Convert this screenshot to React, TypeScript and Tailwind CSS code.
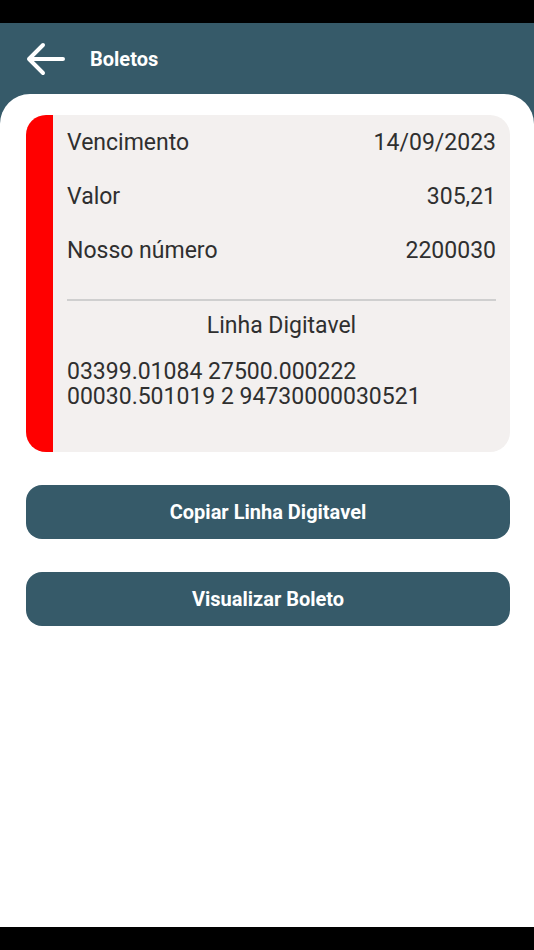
export default function App() {
  const rows = [
    { label: "Vencimento", value: "14/09/2023" },
    { label: "Valor", value: "305,21" },
    { label: "Nosso número", value: "2200030" },
  ];

  return (
    <div
      className="flex h-[950px] w-[534px] flex-col bg-black"
      style={{ fontFamily: "Roboto, 'Noto Sans', sans-serif" }}
    >
      <div className="h-[23px] shrink-0 bg-black" />

      <div className="flex flex-1 flex-col bg-[#365a69]">
        {/* header */}
        <div className="flex h-[71px] shrink-0 items-center">
          <button className="ml-[25px] flex h-[40px] w-[40px] items-center">
            <svg width="40" height="34" viewBox="0 0 40 34" fill="none">
              <path
                d="M38 17H4M18 3L4 17l14 14"
                stroke="white"
                strokeWidth="4"
                strokeLinecap="round"
                strokeLinejoin="round"
              />
            </svg>
          </button>
          <span className="ml-[25px] text-[20px] font-bold text-white">Boletos</span>
        </div>

        {/* sheet */}
        <div className="flex flex-1 flex-col rounded-t-[30px] bg-white pl-[26px] pr-[24px] pt-[21px]">
          <div className="flex overflow-hidden rounded-[20px] bg-[#f3f0ef]">
            <div className="w-[27px] shrink-0 bg-[#ff0000]" />
            <div className="flex-1 pl-[14px] pr-[14px] pb-[43px] pt-[1px] text-[#2f2f2f]">
              {rows.map((r) => (
                <div key={r.label} className="flex h-[54px] items-center justify-between text-[23px]">
                  <span>{r.label}</span>
                  <span>{r.value}</span>
                </div>
              ))}
              <div className="mt-[21px] border-t-2 border-[#cfcfcf]" />
              <div className="mt-[8px] text-center text-[23px]">Linha Digitavel</div>
              <div className="mt-[15px] text-[23px] leading-[25px]">
                <div>03399.01084 27500.000222</div>
                <div>00030.501019 2 94730000030521</div>
              </div>
            </div>
          </div>

          <button className="mt-[33px] h-[54px] w-full rounded-[16px] bg-[#365a69] text-[20px] font-bold text-white">
            Copiar Linha Digitavel
          </button>
          <button className="mt-[33px] h-[54px] w-full rounded-[16px] bg-[#365a69] text-[20px] font-bold text-white">
            Visualizar Boleto
          </button>
        </div>
      </div>

      <div className="h-[23px] shrink-0 bg-black" />
    </div>
  );
}
